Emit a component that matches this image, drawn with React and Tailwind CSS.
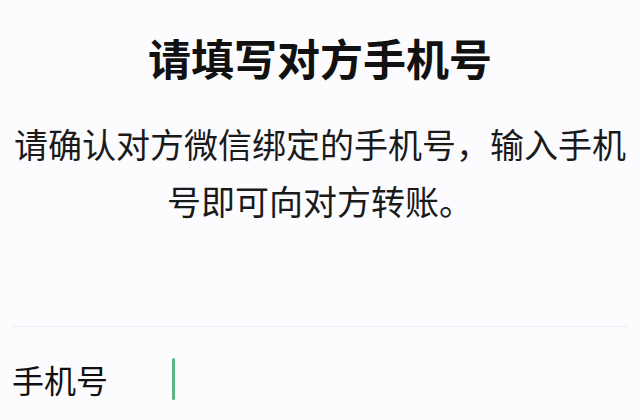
const FONT = "font-['Noto_Sans_CJK_SC','Noto_Sans',sans-serif]";

const App = () => {
 return (
  <div className={`w-full h-[420px] overflow-hidden bg-[#fcfcfe] text-[#111] ${FONT}`}>
   {/* Header */}
   <div className="pt-[29px] text-center">
    <h1 className="text-[43px] leading-[56px] font-bold">请填写对方手机号</h1>
   </div>

   {/* Description */}
   <p className="mt-[30px] px-[12px] text-center text-[34px] leading-[57px] text-[#1a1a1a]">
    请确认对方微信绑定的手机号，输入手机号即可向对方转账。
   </p>

   {/* Divider */}
   <div className="mt-[97px] mx-[12px] h-px bg-[#eceef2]"></div>

   {/* Phone input row */}
   <div className="pt-[31px] flex items-center">
    <span className="w-[172px] pl-[12px] text-[32px] leading-[40px] text-[#111]">手机号</span>
    <span className="w-[3px] h-[42px] rounded-full bg-[#5ab584]"></span>
   </div>
  </div>
 );
};

export default App;
